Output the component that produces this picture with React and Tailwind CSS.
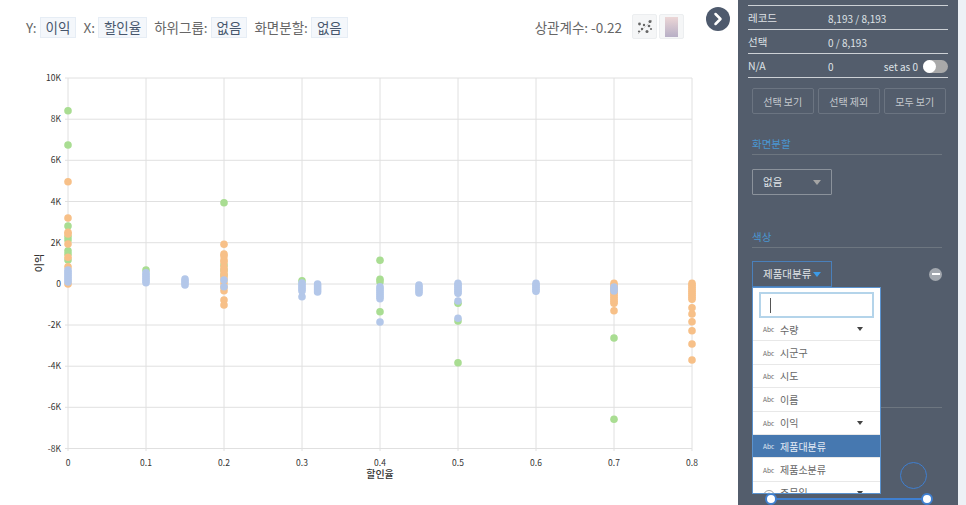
import React from 'react';
import { ChevronRight } from 'lucide-react';

const font = { fontFamily: '"Noto Sans CJK KR", "Noto Sans", sans-serif' };

const xTicks = [0, 0.1, 0.2, 0.3, 0.4, 0.5, 0.6, 0.7, 0.8];
const yTicks = [
    ['10K', 78], ['8K', 119.2], ['6K', 160.3], ['4K', 201.5], ['2K', 242.7],
    ['0', 284], ['-2K', 325], ['-4K', 366.2], ['-6K', 407.3], ['-8K', 448.5],
];
const xPos = (v) => 68 + v * 780;

// columns of points as [x value, pixel y list]
const range = (from, to, step = 2) => {
    const out = [];
    for (let y = from; y <= to; y += step) out.push(y);
    return out;
};

const green = [
    [0, [110.7, 145, 226, 236.7, 240, 250.7, 254, 260]],
    [0.1, [270]],
    [0.2, [202.7, 265, 270, 275]],
    [0.3, [280.7]],
    [0.4, [260.3, 279.3, 281.7, 311.7]],
    [0.5, [303.3, 321, 362.7]],
    [0.7, [338, 419.3]],
];
const orange = [
    [0, [181.7, 218, 232.3, 234, 244, 257.3, 266.7, 284]],
    [0.2, [244.3, 254, 256, 260, 262, 267, 270, 273, 276, 279, 283, 287, 290.7, 300, 305]],
    [0.7, [...range(283.3, 305), 310.7]],
    [0.8, [...range(283.3, 299.3), 307.7, 314, 321.7, 330.7, 344, 360]],
];
const blue = [
    [0, range(270, 283)],
    [0.1, range(272.7, 283)],
    [0.15, range(279, 285)],
    [0.2, [280, 286.7]],
    [0.3, [...range(283, 291.7), 296.7]],
    [0.32, range(284, 292.7)],
    [0.4, [...range(286.7, 299.3), 322]],
    [0.45, range(285, 294.3)],
    [0.5, [...range(283.3, 295), 301, 318.3]],
    [0.6, range(283.3, 293)],
    [0.7, [287, 289.3, 291]],
];

const Dots = ({ data, color }) => (
    <g fill={color}>
        {data.flatMap(([v, ys]) =>
            ys.map((y, i) => <circle key={`${v}-${i}`} cx={xPos(v)} cy={y} r={3.8} />)
        )}
    </g>
);

const Chart = () => (
    <svg width="730" height="430" viewBox="0 60 730 430" className="block" style={font}>
        <g stroke="#e0e0e0" strokeWidth="1">
            {xTicks.map((t) => (
                <line key={t} x1={xPos(t)} x2={xPos(t)} y1={78} y2={451} />
            ))}
            {yTicks.map(([label, y]) => (
                <line key={label} x1={65} x2={692} y1={y} y2={y} />
            ))}
        </g>
        <g fontSize="8.5" fill="#333" textAnchor="end">
            {yTicks.map(([label, y]) => (
                <text key={label} x={61} y={y + 3}>{label}</text>
            ))}
        </g>
        <g fontSize="8.5" fill="#333" textAnchor="middle">
            {xTicks.map((t) => (
                <text key={t} x={xPos(t)} y={466}>{t}</text>
            ))}
        </g>
        <Dots data={green} color="#a9dd92" />
        <Dots data={orange} color="#f7c088" />
        <Dots data={blue} color="#b3c7e9" />
        <text x={380} y={477.5} fontSize="10" fontWeight="500" fill="#333" textAnchor="middle">할인율</text>
        <text x={43} y={263} fontSize="10" fontWeight="500" fill="#333" textAnchor="middle" transform="rotate(-90 43 263)">이익</text>
    </svg>
);

const Chip = ({ children }) => (
    <span className="ml-[3px] mr-[7px] flex h-[21px] items-center border border-[#e6edf5] bg-[#f4f7fb] px-[5px] text-[#46566c]">
        {children}
    </span>
);

const Header = () => (
    <div className="flex h-[60px] items-start pl-[26px] pt-[17px] pr-[54px] text-[13.5px] text-[#666]">
        <span className="leading-[21px]">Y:</span><Chip>이익</Chip>
        <span className="leading-[21px]">X:</span><Chip>할인율</Chip>
        <span className="leading-[21px]">하위그룹:</span><Chip>없음</Chip>
        <span className="leading-[21px]">화면분할:</span><Chip>없음</Chip>
        <span className="ml-auto leading-[21px]">상관계수: -0.22</span>
        <div className="ml-[10px] -mt-[3px] flex gap-[2px]">
            <div className="flex h-[25px] w-[25px] items-center justify-center rounded-[2px] border border-[#eceef0] bg-[#f5f6f7]">
                <svg width="20" height="20" viewBox="0 0 20 20">
                    <line x1="3" y1="17" x2="17" y2="3" stroke="#bbb" strokeWidth="0.8" strokeDasharray="2 1" />
                    <g fill="#666">
                        <circle cx="4.5" cy="7" r="1.4" /><circle cx="9" cy="8" r="1.2" />
                        <circle cx="15" cy="4.5" r="1.5" /><circle cx="14" cy="9" r="1.3" />
                        <circle cx="7" cy="12" r="1.2" /><circle cx="12" cy="14.5" r="1.5" />
                        <circle cx="16" cy="12" r="1.1" /><circle cx="4" cy="14.5" r="1.1" />
                    </g>
                </svg>
            </div>
            <div className="flex h-[25px] w-[25px] items-center justify-center rounded-[2px] border border-[#eceef0] bg-[#f5f6f7]">
                <div className="h-[20px] w-[13px] bg-gradient-to-b from-[#ecd6d6] to-[#b7afc6]" />
            </div>
        </div>
    </div>
);

const StatRow = ({ label, value, children }) => (
    <div className="flex h-6 items-center border-b border-[#cdd1d6] pt-[1px] text-[10px] text-[#dfe2e6]">
        <span className="w-20 text-[10.5px]">{label}</span>
        <span>{value}</span>
        {children}
    </div>
);

const Caret = ({ color }) => (
    <span className="h-0 w-0 border-x-[4px] border-t-[5px] border-x-transparent" style={{ borderTopColor: color }} />
);

const ItemCaret = () => (
    <span className="h-0 w-0 border-x-[3px] border-t-[4px] border-x-transparent border-t-[#444]" />
);

const ClockIcon = () => (
    <svg width="12" height="12" viewBox="0 0 12 12" className="shrink-0">
        <circle cx="6" cy="6" r="5.5" fill="none" stroke="#777" strokeWidth="0.7" />
        <path d="M6 2.5V6" stroke="#777" strokeWidth="0.7" />
    </svg>
);

const items = [
    { name: '수량', caret: true },
    { name: '시군구' },
    { name: '시도' },
    { name: '이름' },
    { name: '이익', caret: true },
    { name: '제품대분류', active: true },
    { name: '제품소분류' },
    { name: '주문일', caret: true, clock: true },
];

const Dropdown = () => (
    <div className="absolute left-0 top-[26px] z-10 h-[207px] w-[129px] overflow-hidden border border-[#5b93cf] bg-white">
        <div className="mx-[6px] mt-[4px] flex h-[26px] items-center border-2 border-[#b4d4ea] pl-[9px]">
            <span className="h-[15px] w-px bg-[#555]" />
        </div>
        {items.map((it) => (
            <div
                key={it.name}
                className={`flex h-[23.4px] items-center border-b border-[#e8e8e8] pl-[10px] pr-[17px] text-[10px] ${it.active ? 'bg-[#4678b0] text-[#e4ecf5]' : 'text-[#666]'}`}
            >
                {it.clock ? (
                    <span className="mt-[6px] w-[17px]"><ClockIcon /></span>
                ) : (
                    <span className="w-[17px] pt-[2px] text-[6.5px]">Abc</span>
                )}
                <span>{it.name}</span>
                {it.caret && <span className="ml-auto flex"><ItemCaret /></span>}
            </div>
        ))}
    </div>
);

const SectionTitle = ({ children }) => (
    <div className="flex h-[22px] items-center border-b border-[#6d7680] text-[10.5px] text-[#4a97d2]">{children}</div>
);

const Sidebar = () => (
    <div className="h-full w-[220px] shrink-0 overflow-hidden bg-[#535d6c]">
        <div className="mx-[10px] mt-[5px] border-t border-[#cdd1d6]">
            <StatRow label="레코드" value="8,193 / 8,193" />
            <StatRow label="선택" value="0 / 8,193" />
            <StatRow label="N/A" value="0">
                <span className="ml-auto mr-[5px]">set as 0</span>
                <span className="relative h-[13px] w-[25px] rounded-full bg-[#a9a9a9]">
                    <span className="absolute left-0 top-0 h-[13px] w-[13px] rounded-full bg-white" />
                </span>
            </StatRow>
        </div>
        <div className="ml-[14px] mt-[10px] flex gap-[4.5px]">
            {['선택 보기', '선택 제외', '모두 보기'].map((b) => (
                <div key={b} className="flex h-[26px] w-[61.5px] items-center justify-center rounded-[2px] border border-[#6b7481] text-[10px] text-[#c5c9ce]">
                    {b}
                </div>
            ))}
        </div>
        <div className="ml-[14px] mr-[16px] mt-[19px]">
            <SectionTitle>화면분할</SectionTitle>
            <div className="mt-[14px] flex h-[26px] w-[80px] items-center justify-between rounded-[1px] border border-[#8b929b] pl-[10px] pr-[10px] text-[10.5px] text-[#dfe2e6]">
                없음 <Caret color="#a5a5a5" />
            </div>
        </div>
        <div className="ml-[14px] mr-[16px] mt-[31px]">
            <SectionTitle>색상</SectionTitle>
            <div className="relative mt-[13px] flex items-center justify-between">
                <div className="flex h-[26px] w-[80px] items-center justify-between border border-[#4a80bb] pl-[10px] pr-[10px] text-[10.5px] text-[#e2e5e8]">
                    제품대분류 <Caret color="#3c9be8" />
                </div>
                <div className="flex h-[13px] w-[13px] items-center justify-center rounded-full bg-[#a3a8af]">
                    <span className="h-[1.5px] w-[8px] bg-white" />
                </div>
                <Dropdown />
            </div>
            <div className="mt-[120px] h-px bg-[#6d7680]" />
            <div className="mr-[15px] mt-[54px] flex justify-end">
                <span className="h-[27px] w-[27px] rounded-full border border-[#3f7fd0]" />
            </div>
            <div className="relative ml-[19px] mr-[15px] mt-[9px] h-[2px] bg-[#3f7fd0]">
                <span className="absolute -left-[6px] -top-[5px] h-[12px] w-[12px] rounded-full border-2 border-[#3f7fd0] bg-white" />
                <span className="absolute -right-[6px] -top-[5px] h-[12px] w-[12px] rounded-full border-2 border-[#3f7fd0] bg-white" />
            </div>
        </div>
    </div>
);

export default function App() {
    return (
        <div className="relative flex h-[505px] w-[966px] overflow-hidden bg-white" style={font}>
            <div className="w-[738px] shrink-0">
                <Header />
                <Chart />
            </div>
            <Sidebar />
            <div className="flex-1 bg-[#edf1f6]" />
            <div className="absolute left-[706px] top-[7px] flex h-6 w-6 items-center justify-center rounded-full bg-[#4e5a6d] text-white">
                <ChevronRight size={20} strokeWidth={3} />
            </div>
        </div>
    );
}
